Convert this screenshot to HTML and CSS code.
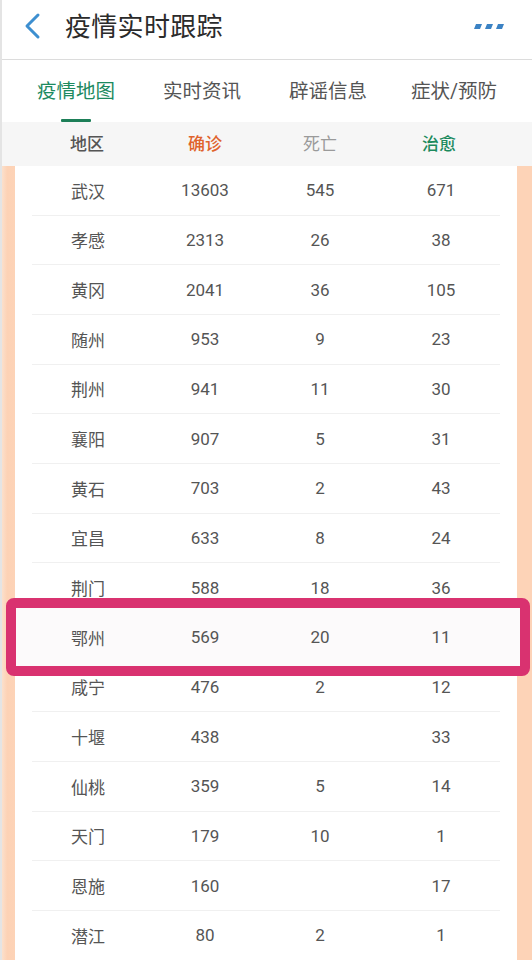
FILE: index.html
```html
<!DOCTYPE html>
<html lang="zh">
<head>
<meta charset="utf-8">
<title>疫情实时跟踪</title>
<link rel="stylesheet" href="styles.css">
</head>
<body>
<div class="app">
  <header class="topbar">
    <svg class="back" width="20" height="28" viewBox="0 0 20 28"><path d="M15 3 L4 14 L15 25" fill="none" stroke="#3d8fd0" stroke-width="3" stroke-linecap="round" stroke-linejoin="round"/></svg>
    <h1 class="title">疫情实时跟踪</h1>
    <svg class="more" width="32" height="8" viewBox="0 0 32 8"><path d="M2 1 H8 L6 6 H0 Z M13 1 H19 L17 6 H11 Z M24 1 H30 L28 6 H22 Z" fill="#3b82c4"/></svg>
  </header>
  <nav class="tabs">
    <div class="tab active">疫情地图<span class="bar"></span></div>
    <div class="tab">实时资讯</div>
    <div class="tab">辟谣信息</div>
    <div class="tab">症状/预防</div>
  </nav>
  <div class="thead">
    <div class="grid">
      <span class="name">地区</span>
      <span class="c confirm">确诊</span>
      <span class="c death">死亡</span>
      <span class="c cure">治愈</span>
    </div>
  </div>
  <div class="body">
    <div class="side"></div>
    <div class="list">
      <div class="row grid"><span class="name">武汉</span><span class="c">13603</span><span class="c">545</span><span class="c">671</span></div>
      <div class="row grid"><span class="name">孝感</span><span class="c">2313</span><span class="c">26</span><span class="c">38</span></div>
      <div class="row grid"><span class="name">黄冈</span><span class="c">2041</span><span class="c">36</span><span class="c">105</span></div>
      <div class="row grid"><span class="name">随州</span><span class="c">953</span><span class="c">9</span><span class="c">23</span></div>
      <div class="row grid"><span class="name">荆州</span><span class="c">941</span><span class="c">11</span><span class="c">30</span></div>
      <div class="row grid"><span class="name">襄阳</span><span class="c">907</span><span class="c">5</span><span class="c">31</span></div>
      <div class="row grid"><span class="name">黄石</span><span class="c">703</span><span class="c">2</span><span class="c">43</span></div>
      <div class="row grid"><span class="name">宜昌</span><span class="c">633</span><span class="c">8</span><span class="c">24</span></div>
      <div class="row grid"><span class="name">荆门</span><span class="c">588</span><span class="c">18</span><span class="c">36</span></div>
      <div class="row grid hl"><span class="mark"></span><span class="name">鄂州</span><span class="c">569</span><span class="c">20</span><span class="c">11</span></div>
      <div class="row grid"><span class="name">咸宁</span><span class="c">476</span><span class="c">2</span><span class="c">12</span></div>
      <div class="row grid"><span class="name">十堰</span><span class="c">438</span><span class="c"></span><span class="c">33</span></div>
      <div class="row grid"><span class="name">仙桃</span><span class="c">359</span><span class="c">5</span><span class="c">14</span></div>
      <div class="row grid"><span class="name">天门</span><span class="c">179</span><span class="c">10</span><span class="c">1</span></div>
      <div class="row grid"><span class="name">恩施</span><span class="c">160</span><span class="c"></span><span class="c">17</span></div>
      <div class="row grid"><span class="name">潜江</span><span class="c">80</span><span class="c">2</span><span class="c">1</span></div>
    </div>
    <div class="side right"></div>
  </div>
</div>
</body>
</html>
```

FILE: styles.css
```css
* { box-sizing: border-box; margin: 0; padding: 0; }
html, body { width: 532px; height: 960px; overflow: hidden; background: #fff; }
body { font-family: "Roboto", "Noto Sans CJK SC", sans-serif; color: #555; }
.app { width: 532px; height: 960px; display: flex; flex-direction: column; border-left: 2px solid #e4e4e4; }

.topbar { height: 60px; display: flex; align-items: center; border-bottom: 1px solid #dcdcdc; flex-shrink: 0; padding-bottom: 8px; }
.back { margin-left: 21px; }
.title { font-weight: 400; font-size: 26px; color: #2b2b2b; margin-left: 22px; margin-top: -2px; letter-spacing: 0.3px; }
.more { margin-left: auto; margin-right: 26px; margin-top: 2px; }

.tabs { height: 62px; display: flex; flex-shrink: 0; padding-left: 35px; }
.tab { position: relative; flex: 0 0 126px; display: flex; align-items: center; font-size: 19.5px; color: #555; padding-bottom: 3px; }
.tab:nth-child(3) { flex-basis: 122px; }
.tab:nth-child(4) { flex: 1; }
.tab.active { color: #1d8a5f; }
.bar { position: absolute; left: 24px; bottom: 0; width: 30px; height: 3px; background: #1d7f58; border-radius: 1px; }

.grid { display: grid; grid-template-columns: 116px 114px 116px 122px; align-items: center; }
.name { padding-left: 39px; }
.c { text-align: center; }
.c:last-child { padding-left: 4px; }

.thead { height: 44px; background: #f6f6f6; display: flex; align-items: center; padding-left: 30px; padding-bottom: 4px; flex-shrink: 0; font-size: 17px; }
.thead .name { color: #555; font-weight: 500; padding-left: 38px; }
.thead .confirm { color: #e0632c; font-weight: 500; }
.thead .death { color: #9a9a9a; }
.thead .cure { color: #1b8a5d; font-weight: 500; padding-left: 0; }

.body { flex: 1; display: flex; }
.side { flex: 0 0 13px; background: linear-gradient(90deg, #fbe0cc 0%, #fdd2b5 40%, #fdd3b7 100%); }
.side.right { flex-basis: 15px; background: #fdd3b7; }
.list { flex: 1; min-width: 0; background: #fff; padding: 0 17px; }
.row { height: 49.67px; border-bottom: 1px solid #f0f0f0; font-size: 17px; color: #555; position: relative; }
.row span { position: relative; z-index: 2; }
.row.hl { border-bottom-color: transparent; }
.row .mark { position: absolute; z-index: 1; left: -26px; right: -30px; top: -15px; bottom: -14px; border: 10px solid #d93270; border-radius: 8px; background: #fcfafb; }
```
